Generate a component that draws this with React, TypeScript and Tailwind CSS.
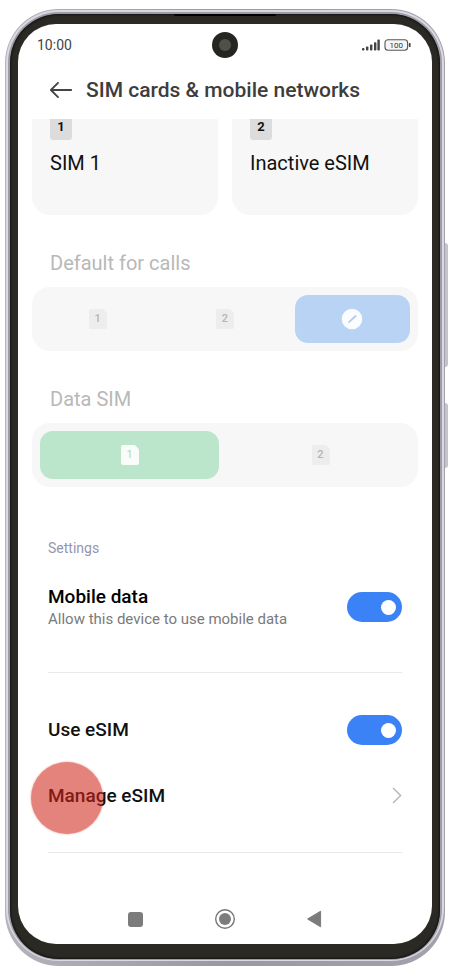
import { useState } from "react";
import type { ReactNode } from "react";

function SimChip({ n, className, fill }: { n: number; className: string; fill: string }) {
  return (
    <span className={`relative flex h-5 w-[18px] items-center justify-center ${className}`}>
      <svg className="absolute inset-0" width="18" height="20" viewBox="0 0 18 20" aria-hidden="true">
        <path d="M2 0H12.5Q14 0 15 1L17 3.2Q18 4.2 18 5.5V18a2 2 0 0 1-2 2H2a2 2 0 0 1-2-2V2a2 2 0 0 1 2-2Z" fill={fill} />
      </svg>
      <span className="relative text-[11px] leading-5">{n}</span>
    </span>
  );
}

function SimCard({ n, name }: { n: number; name: string }) {
  return (
    <button type="button" className="flex h-24 flex-1 flex-col items-start rounded-b-[18px] bg-[#f7f7f7] px-[18px] text-left">
      <span className="flex h-[21px] w-[22px] justify-center rounded-b-[3px] bg-[#dcdcdc] text-[13px] leading-4 font-bold text-[#111]">
        {n}
      </span>
      <span className="mt-[11px] text-xl leading-6 whitespace-nowrap text-[#111]">{name}</span>
    </button>
  );
}

function Segment({
  name,
  label,
  checked,
  onSelect,
  tint,
  children,
}: {
  name: string;
  label: string;
  checked: boolean;
  onSelect: () => void;
  tint: string;
  children: ReactNode;
}) {
  return (
    <label className={`relative flex h-12 flex-1 items-center justify-center rounded-[13px] ${checked ? tint : ""}`}>
      <input type="radio" name={name} aria-label={label} checked={checked} onChange={onSelect} className="sr-only" />
      {children}
    </label>
  );
}

function Toggle({ id }: { id: string }) {
  const [on, setOn] = useState(true);
  return (
    <input
      id={id}
      type="checkbox"
      role="switch"
      checked={on}
      onChange={() => setOn(!on)}
      className="flex h-[30px] w-[55px] shrink-0 appearance-none items-center rounded-full bg-[#c9c9c9] px-[6px] before:block before:size-[15px] before:rounded-full before:bg-white checked:justify-end checked:bg-[#3b82f6]"
    />
  );
}

export default function App() {
  const [calls, setCalls] = useState("none");
  const [data, setData] = useState("1");

  return (
    <div className="bg-white px-[5px] pt-[9px] pb-1 font-[Roboto,sans-serif]">
      <div className="relative rounded-[54px] bg-linear-to-r from-[#b4b3ba] via-[#9a99a3] to-[#a3a1ac] px-px pt-px pb-[5px]">
        <div className="absolute top-[234px] -right-[3px] h-[124px] w-[3px] rounded-r-[3px] bg-[#c4c2ca]" />
        <div className="absolute top-[394px] -right-[3px] h-[65px] w-[3px] rounded-r-[3px] bg-[#c4c2ca]" />
        <div className="rounded-[53px] bg-[#dad9e2] px-[2px] pt-[2px] pb-px">
          <div className="rounded-[51px] bg-[#9d9ba6] px-[2px] pt-[2px] pb-px">
            <div className="relative rounded-[49px] bg-[#2a2924] px-2 pt-[10px] pb-[15px] shadow-[inset_0_0_2px_1px_#141412]">
              <div className="absolute top-0 left-1/2 h-[2px] w-[102px] -translate-x-1/2 rounded-full bg-black" />
              <main className="relative overflow-hidden rounded-[38px] bg-white">
                <div className="absolute top-2 left-1/2 flex size-[26px] -translate-x-1/2 items-center justify-center rounded-full bg-[#252522]">
                  <div className="size-3 rounded-full bg-[#4e5148]" />
                </div>

                <div className="flex h-[42px] items-center justify-between pr-[21px] pl-[19px]">
                  <span className="text-sm text-[#444]">10:00</span>
                  <svg width="49" height="12" viewBox="0 0 49 12" aria-label="Signal and battery" role="img">
                    <g fill="#444">
                      <rect x="0" y="9" width="2.4" height="2.6" rx=".8" />
                      <rect x="4" y="7.5" width="2.4" height="4.1" rx=".8" />
                      <rect x="8" y="5.5" width="2.4" height="6.1" rx=".8" />
                      <rect x="12" y="3.2" width="2.4" height="8.4" rx=".8" />
                      <rect x="15.4" y=".6" width="2.4" height="11" rx=".8" />
                      <rect x="46.8" y="4" width="1.8" height="4" rx=".7" />
                    </g>
                    <rect x="23" y=".8" width="22.6" height="10.4" rx="3" fill="#f6f6f6" stroke="#555" strokeWidth="1.1" />
                    <text x="34.3" y="9" textAnchor="middle" fontSize="8" fill="#333" fontFamily="Roboto, sans-serif">
                      100
                    </text>
                  </svg>
                </div>

                <header className="mb-[5px] flex h-12 items-center gap-3 pl-8">
                  <button type="button" aria-label="Back">
                    <svg width="24" height="18" viewBox="0 0 24 18" fill="none" stroke="#444" strokeWidth="1.8" strokeLinecap="round" strokeLinejoin="round">
                      <path d="M21.2 9H1M8 1.8L.9 9L8 16.2" />
                    </svg>
                  </button>
                  <h1 className="text-[21px] leading-6 font-medium whitespace-nowrap text-[#3d3d3d]">SIM cards &amp; mobile networks</h1>
                </header>

                <div className="px-[14px]">
                  <div className="flex gap-[14px]">
                    <SimCard n={1} name="SIM 1" />
                    <SimCard n={2} name="Inactive eSIM" />
                  </div>

                  <section>
                    <h2 className="mt-9 mb-3 pl-[18px] text-xl leading-6 text-[#b8b8b8]">Default for calls</h2>
                    <div className="flex gap-3 rounded-[18px] bg-[#f7f7f7] p-2">
                      <Segment name="calls" label="SIM 1" tint="bg-[#b9d3f5]" checked={calls === "1"} onSelect={() => setCalls("1")}>
                        <SimChip n={1} fill="#ededed" className="font-medium text-[#b4b4b4]" />
                      </Segment>
                      <Segment name="calls" label="SIM 2" tint="bg-[#b9d3f5]" checked={calls === "2"} onSelect={() => setCalls("2")}>
                        <SimChip n={2} fill="#ededed" className="font-medium text-[#b4b4b4]" />
                      </Segment>
                      <Segment name="calls" label="No default" tint="bg-[#b9d3f5]" checked={calls === "none"} onSelect={() => setCalls("none")}>
                        <svg width="22" height="22" viewBox="0 0 22 22" aria-hidden="true">
                          <circle cx="11" cy="11" r="10.3" fill="#fafcff" />
                          <path d="M8 14.2L14.6 8" stroke="#b3cdf0" strokeWidth="1.8" strokeLinecap="round" />
                        </svg>
                      </Segment>
                    </div>
                  </section>

                  <section>
                    <h2 className="mt-9 mb-3 pl-[18px] text-xl leading-6 text-[#b8b8b8]">Data SIM</h2>
                    <div className="flex gap-3 rounded-[18px] bg-[#f7f7f7] p-2">
                      <Segment name="data" label="SIM 1" tint="bg-[#bbe6cb]" checked={data === "1"} onSelect={() => setData("1")}>
                        <SimChip n={1} fill="#fafcfa" className="text-[#a5d8b8]" />
                      </Segment>
                      <Segment name="data" label="SIM 2" tint="bg-[#bbe6cb]" checked={data === "2"} onSelect={() => setData("2")}>
                        <SimChip n={2} fill="#ededed" className="font-medium text-[#b4b4b4]" />
                      </Segment>
                    </div>
                  </section>
                </div>

                <section className="px-[30px] pt-[53px]">
                  <h2 className="text-sm leading-4 text-[#9496b0]">Settings</h2>
                  <div className="mt-[29px] flex items-center justify-between border-b border-[#e9e9e9] pb-[43px]">
                    <label htmlFor="mobile-data" className="block">
                      <span className="block text-[19px] leading-6 font-medium text-black">Mobile data</span>
                      <span className="block text-[15px] leading-5 whitespace-nowrap text-[#7a7a7a]">Allow this device to use mobile data</span>
                    </label>
                    <Toggle id="mobile-data" />
                  </div>
                  <div className="mt-[42px] flex h-[30px] items-center justify-between">
                    <label htmlFor="use-esim" className="text-[19px] leading-6 font-medium text-[#111]">Use eSIM</label>
                    <Toggle id="use-esim" />
                  </div>
                  <div className="mt-7 border-b border-[#e9e9e9] pb-[34px]">
                    <a href="#manage-esim" className="relative flex h-[45px] items-center justify-between">
                      <span className="text-[19px] leading-6 font-medium text-[#111]">Manage eSIM</span>
                      <svg width="10" height="17" viewBox="0 0 10 17" fill="none" stroke="#b5b5b5" strokeWidth="1.4" aria-hidden="true">
                        <path d="M1 1L8.6 8.5L1 16" />
                      </svg>
                      <span className="absolute top-[-11px] -left-[17px] size-[72px] rounded-full bg-[#cf2419]/57 shadow-[0_0_2px_#cf2419]/50" />
                    </a>
                  </div>
                </section>

                <nav className="mt-[50px] flex items-center justify-center gap-[68px] pb-[9px]">
                  <button type="button" aria-label="Recent apps" className="flex h-8 w-[22px] items-center justify-center">
                    <span className="size-[15px] rounded-[3px] bg-[#7c7c7c]" />
                  </button>
                  <button type="button" aria-label="Home">
                    <svg width="22" height="22" viewBox="0 0 22 22">
                      <circle cx="11" cy="11" r="9.3" fill="none" stroke="#777" strokeWidth="1.4" />
                      <circle cx="11" cy="11" r="6" fill="#7c7c7c" />
                    </svg>
                  </button>
                  <button type="button" aria-label="Back to previous screen">
                    <svg width="22" height="22" viewBox="0 0 22 22">
                      <path d="M3.6 11L16.6 3.2V18.8Z" fill="#7c7c7c" stroke="#7c7c7c" strokeLinejoin="round" />
                    </svg>
                  </button>
                </nav>
              </main>
            </div>
          </div>
        </div>
      </div>
    </div>
  );
}
